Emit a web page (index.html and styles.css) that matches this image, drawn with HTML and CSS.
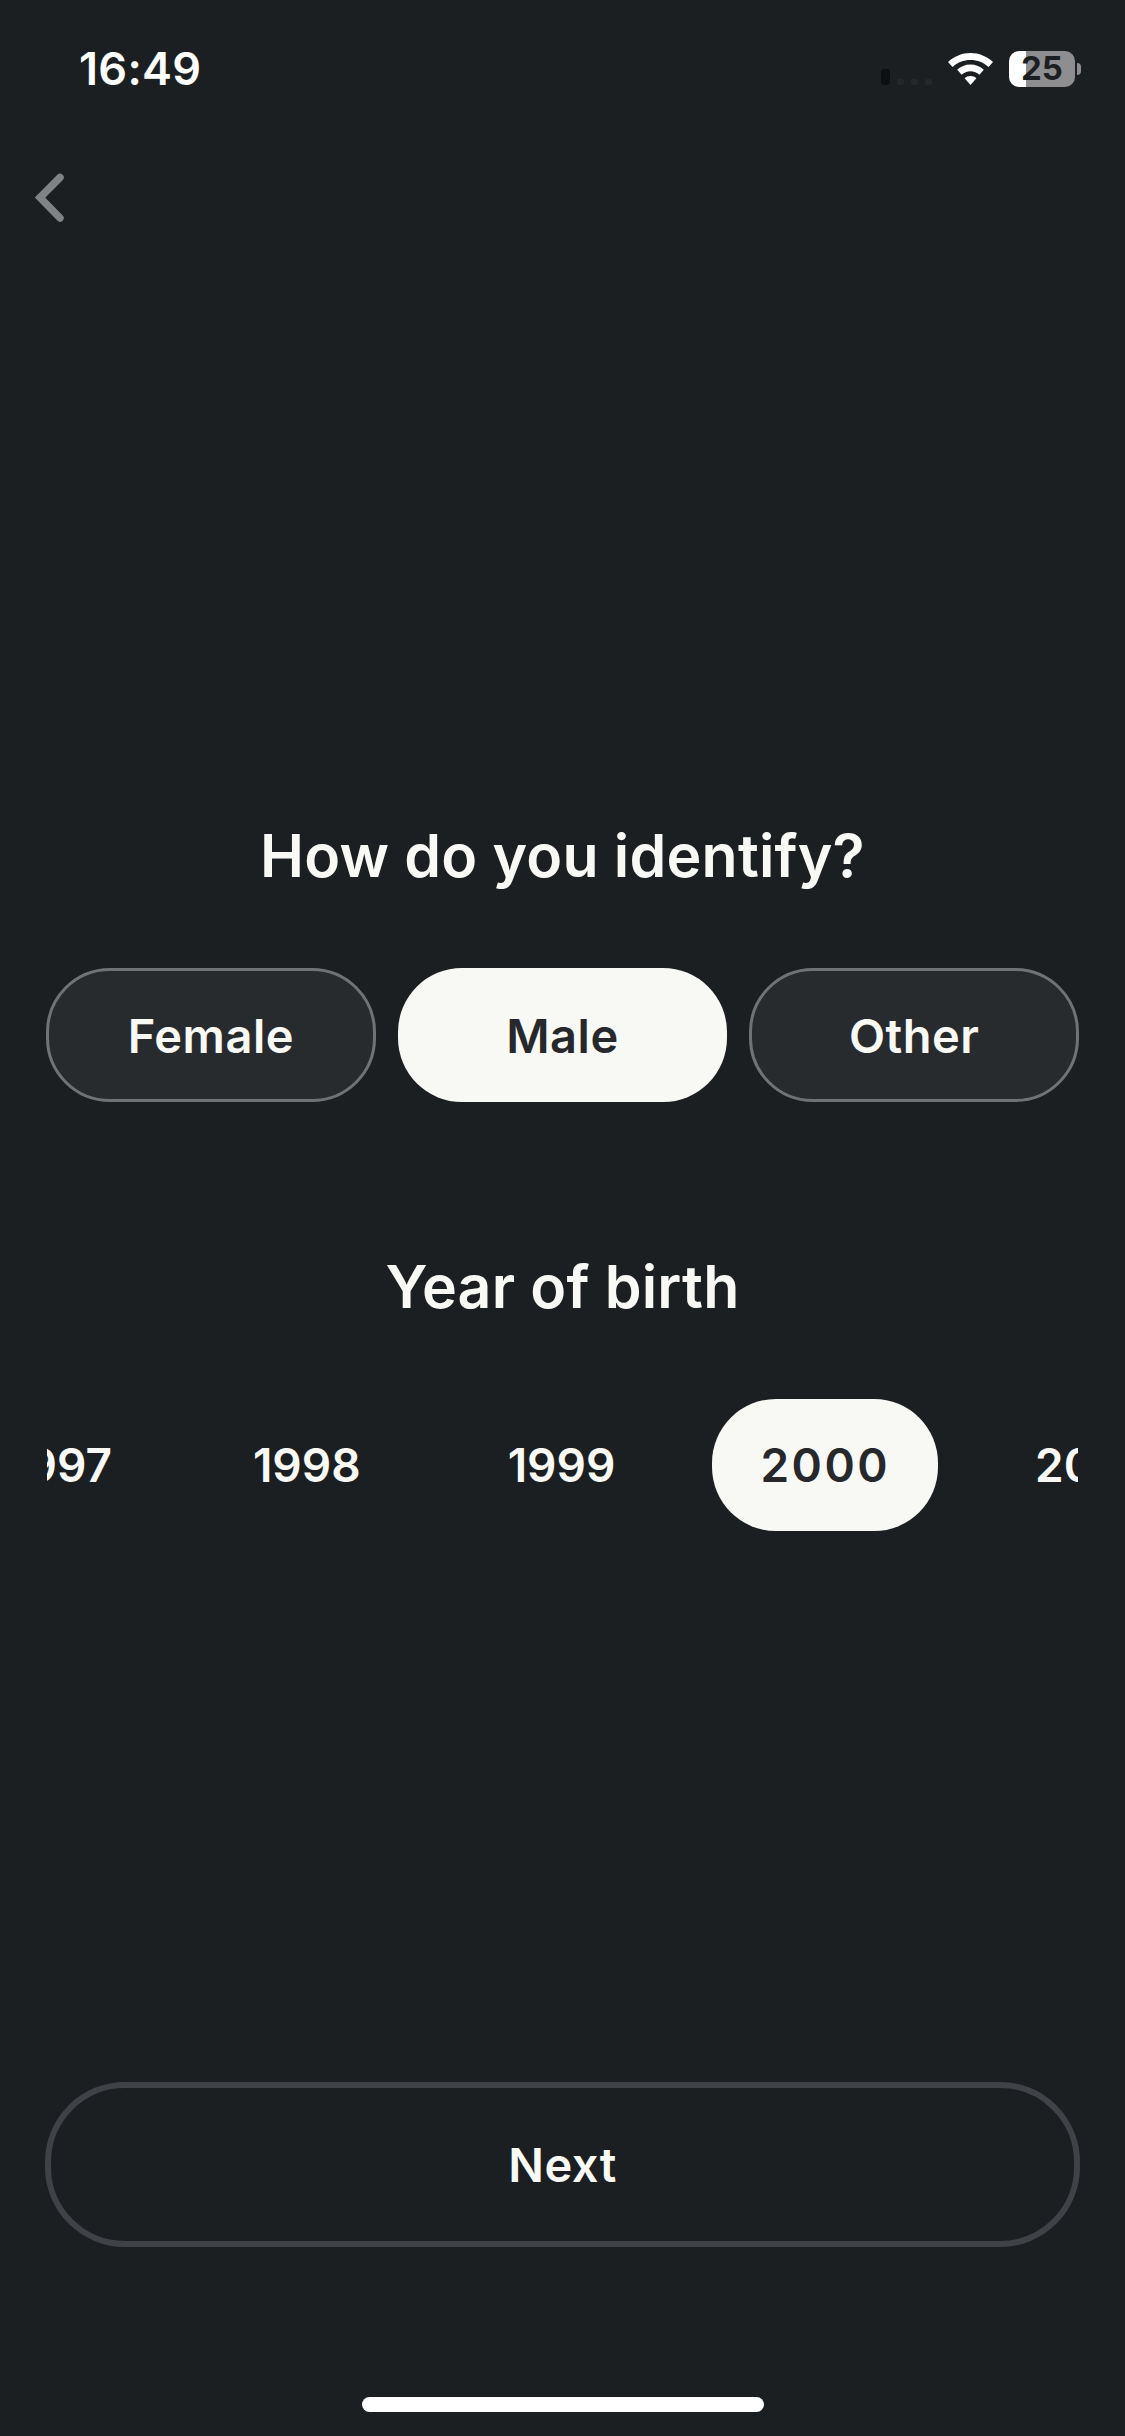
FILE: index.html
```html
<!DOCTYPE html>
<html lang="en">
<head>
<meta charset="utf-8">
<title>How do you identify?</title>
<link rel="stylesheet" href="styles.css">
</head>
<body>
<div class="screen">
  <header class="status">
    <span class="time">16:49</span>
    <div class="status-right">
      <div class="signal"><i class="bar on"></i><i class="bar"></i><i class="bar"></i><i class="bar"></i></div>
      <svg class="wifi" viewBox="0 0 45 32" aria-hidden="true">
        <path d="M22.5 0C31 0 39 3.4 45 9L40.5 14C35.7 9.6 29.4 7 22.5 7C15.6 7 9.3 9.6 4.5 14L0 9C6 3.4 14 0 22.5 0Z"/>
        <path d="M22.5 11.5C27.6 11.5 32.3 13.5 35.8 16.8L31.3 21.7C29 19.6 25.9 18.3 22.5 18.3C19.1 18.3 16 19.6 13.7 21.7L9.2 16.8C12.7 13.5 17.4 11.5 22.5 11.5Z"/>
        <path d="M22.5 23C24.8 23 26.8 23.8 28.4 25.2L22.5 32L16.6 25.2C18.2 23.8 20.2 23 22.5 23Z"/>
      </svg>
      <div class="battery"><span>25</span></div>
    </div>
  </header>

  <nav class="nav">
    <svg class="back" viewBox="0 0 30 50" aria-hidden="true">
      <path d="M25 4.500L5 24.500L25 45"/>
    </svg>
  </nav>

  <main class="content">
    <h1 class="title">How do you identify?</h1>
    <div class="genders">
      <button class="pill">Female</button>
      <button class="pill selected">Male</button>
      <button class="pill">Other</button>
    </div>

    <h2 class="title year-title">Year of birth</h2>
    <div class="years">
      <div class="year-track">
        <span class="year">1997</span>
        <span class="year">1998</span>
        <span class="year">1999</span>
        <span class="year selected">2000</span>
        <span class="year">2001</span>
      </div>
    </div>
  </main>

  <footer class="footer">
    <button class="next">Next</button>
    <div class="home"></div>
  </footer>
</div>
</body>
</html>
```
FILE: styles.css
```css
* {
  box-sizing: border-box;
}

html,
body {
  margin: 0;
  padding: 0;
  background: #1c1f22;
}

.screen {
  width: 1125px;
  height: 2436px;
  display: flex;
  flex-direction: column;
  overflow: hidden;
  background: #1c1f22;
  color: #f8f8f5;
  font-family: "Inter", "Liberation Sans", sans-serif;
}

.status {
  height: 137px;
  flex: none;
  display: flex;
  align-items: center;
  justify-content: space-between;
  padding: 0 50px 0 79px;
}

.time {
  font-size: 45px;
  font-weight: 600;
  color: #fff;
  line-height: 1;
  letter-spacing: 0.3px;
}

.status-right {
  display: flex;
  align-items: center;
}

.signal {
  display: flex;
  align-items: flex-end;
  gap: 7px;
  margin-right: 16px;
  padding-top: 17px;
}

.bar {
  display: block;
  width: 7px;
  height: 6px;
  border-radius: 2px;
  background: #25282b;
}

.bar.on {
  width: 9px;
  height: 16px;
  border-radius: 3px;
  background: #0d0f11;
}

.wifi {
  width: 45px;
  height: 32px;
  fill: #fff;
  margin-right: 16px;
}

.battery {
  position: relative;
  width: 66px;
  height: 36px;
  border-radius: 10px;
  background: linear-gradient(90deg, #fff 26%, #8e8e90 26%);
  display: flex;
  align-items: center;
  justify-content: center;
  font-size: 33px;
  font-weight: 700;
  color: #1c1f22;
  line-height: 1;
}

.battery::after {
  content: "";
  position: absolute;
  left: 68px;
  top: 12px;
  width: 4px;
  height: 12px;
  border-radius: 0 6px 6px 0;
  background: #8e8e90;
}

.nav {
  flex: none;
  height: 103px;
  padding: 36px 0 0 35px;
}

.back {
  display: block;
  width: 30px;
  height: 50px;
  fill: none;
  stroke: #808284;
  stroke-width: 7.5;
  stroke-linecap: round;
  stroke-linejoin: miter;
}

.content {
  flex: none;
  padding-top: 580px;
}

.title {
  margin: 0;
  text-align: center;
  font-size: 59px;
  font-weight: 600;
  line-height: 72px;
  letter-spacing: 0.2px;
}

.genders {
  display: grid;
  grid-template-columns: repeat(3, 1fr);
  gap: 22px;
  margin-top: 76px;
  padding: 0 46px;
}

.pill {
  height: 134px;
  padding: 0;
  border: 3px solid #6f7376;
  border-radius: 64px;
  background: #282b2e;
  color: #f8f8f5;
  font: inherit;
  font-size: 47px;
  font-weight: 600;
  letter-spacing: 0.5px;
}

.pill.selected {
  border: 0;
  background: #f8f8f5;
  color: #26282b;
}

.year-title {
  margin-top: 149px;
}

.years {
  margin: 76px 47px 0;
  height: 132px;
  overflow: hidden;
}

.year-track {
  display: flex;
  align-items: center;
  gap: 47px;
  height: 100%;
  margin-left: -89px;
  width: max-content;
}

.year {
  display: flex;
  align-items: center;
  justify-content: center;
  height: 132px;
  padding: 0 50px;
  border-radius: 64px;
  font-size: 46px;
  font-weight: 600;
}

.year:first-child {
  margin-right: -6px;
}

.year.selected {
  padding: 0 48px;
  background: #f8f8f5;
  color: #26282b;
  letter-spacing: 2.5px;
}

.footer {
  margin-top: auto;
  padding: 0 45px 24px;
  display: flex;
  flex-direction: column;
  align-items: center;
}

.next {
  width: 100%;
  height: 165px;
  padding: 0;
  border: 6px solid #3f4347;
  border-radius: 80px;
  background: transparent;
  color: #f8f8f5;
  font: inherit;
  font-size: 47px;
  font-weight: 600;
  letter-spacing: 0.5px;
}

.home {
  width: 402px;
  height: 15px;
  margin-top: 150px;
  border-radius: 8px;
  background: #fff;
}
```
